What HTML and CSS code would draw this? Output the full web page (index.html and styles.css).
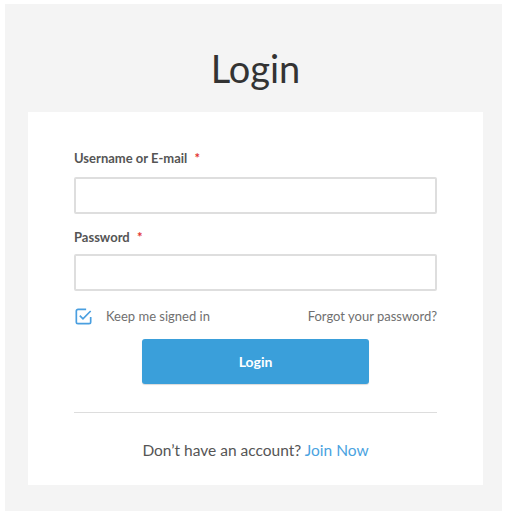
FILE: index.html
```html
<!DOCTYPE html>
<html lang="en">
<head>
    <meta charset="UTF-8">
    <meta name="viewport" content="width=device-width, initial-scale=1.0">
    <title>Login</title>
    <link rel="stylesheet" href="styles.css">
</head>
<body>
    <div class="panel">
        <h1 class="title">Login</h1>

        <form class="card">
            <label class="field-label" for="username">Username or E-mail <span class="required">*</span></label>
            <input class="field-input" type="text" id="username">

            <label class="field-label second" for="password">Password <span class="required">*</span></label>
            <input class="field-input" type="password" id="password">

            <div class="options">
                <label class="remember">
                    <svg class="check-icon" width="19" height="19" viewBox="0 0 18 18">
                        <path d="M11.5 2.2H3.8A1.6 1.6 0 0 0 2.2 3.8v10.4A1.6 1.6 0 0 0 3.8 15.8h10.4a1.6 1.6 0 0 0 1.6-1.6V9.5" fill="none" stroke="#4a9fe0" stroke-width="1.6"/>
                        <path d="M5.5 8.2l3 3L15.8 3.8" fill="none" stroke="#4a9fe0" stroke-width="1.6"/>
                    </svg>
                    <span>Keep me signed in</span>
                </label>
                <a href="#" class="forgot">Forgot your password?</a>
            </div>

            <button type="button" class="login-btn">Login</button>

            <hr class="divider">

            <p class="signup">Don’t have an account? <a href="#">Join Now</a></p>
        </form>
    </div>
</body>
</html>
```

FILE: styles.css
```css
body {
    margin: 0;
    padding: 4px 6px 5px 5px;
    background-color: #ffffff;
    font-family: Lato, "Open Sans", sans-serif;
}

.panel {
    background-color: #f4f4f4;
    padding: 0 19px 26px 23px;
}

.title {
    margin: 0;
    padding: 40px 0 20px;
    font-size: 38px;
    font-weight: 400;
    line-height: 48px;
    text-align: center;
    color: #333333;
}

.card {
    background-color: #ffffff;
    padding: 37px 46px 0;
    height: 336px;
    box-sizing: content-box;
    display: flex;
    flex-direction: column;
}

.field-label {
    font-size: 13px;
    font-weight: bold;
    line-height: 18px;
    color: #555555;
    margin-bottom: 10px;
}

.field-label.second {
    margin-top: 14px;
    margin-bottom: 8px;
}

.required {
    color: #e2332f;
    margin-left: 4px;
}

.field-input {
    height: 37px;
    box-sizing: border-box;
    border: 2px solid #dedede;
    border-radius: 2px;
    padding: 0 10px;
    font-size: 14px;
    font-family: inherit;
}

.options {
    display: flex;
    justify-content: space-between;
    align-items: center;
    margin-top: 15px;
    height: 20px;
    font-size: 13px;
    color: #707070;
}

.remember {
    display: flex;
    align-items: center;
    gap: 13px;
}

.check-icon {
    display: block;
}

.forgot {
    color: #707070;
    text-decoration: none;
}

.login-btn {
    align-self: center;
    width: 227px;
    height: 45px;
    margin-top: 13px;
    border: none;
    border-radius: 3px;
    background-color: #3a9fda;
    box-shadow: 0 1px 1px rgba(0, 0, 0, 0.15);
    color: #ffffff;
    font-family: inherit;
    font-size: 14px;
    font-weight: bold;
}

.divider {
    margin: 28px 0 0;
    border: none;
    border-top: 1px solid #dddddd;
}

.signup {
    margin: 26px 0 0;
    text-align: center;
    font-size: 15.5px;
    line-height: 22px;
    color: #555555;
}

.signup a {
    color: #4aa3df;
    text-decoration: none;
}
```
